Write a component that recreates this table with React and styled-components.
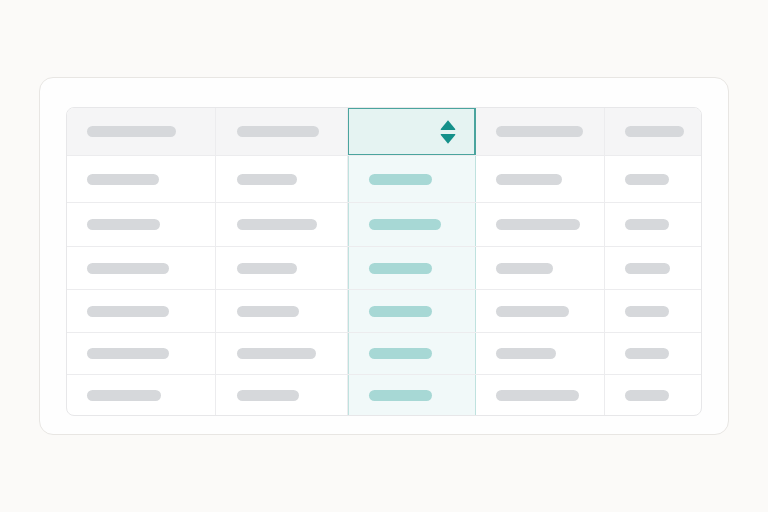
import React from "react";
import styled, { createGlobalStyle } from "styled-components";

const Global = createGlobalStyle`
  html, body { margin: 0; padding: 0; background: #fbfaf8; font-family: "Inter", "Liberation Sans", sans-serif; }
`;

const Page = styled.div`
  width: 100vw;
  height: 100vh;
  display: flex;
  align-items: center;
  justify-content: center;
`;

const Card = styled.div`
  box-sizing: border-box;
  width: 690px;
  height: 358px;
  padding: 29px 26px 20px 26px;
  background: #fefefe;
  border: 1px solid #e8e6e3;
  border-radius: 14px;
`;

const Table = styled.div`
  box-sizing: border-box;
  width: 636px;
  border: 1px solid #e7e7e9;
  border-radius: 8px;
  overflow: hidden;
  background: #fff;
`;

const Row = styled.div`
  display: grid;
  grid-template-columns: 149px 132px 128px 129px 96px;
  height: ${(p) => p.$h}px;
  border-bottom: ${(p) => (p.$last ? "none" : "1px solid #ececee")};
  background: ${(p) => (p.$header ? "#f5f5f6" : "transparent")};
  box-sizing: border-box;
`;

const Cell = styled.div`
  position: relative;
  display: flex;
  align-items: center;
  padding-left: ${(p) => p.$pad}px;
  box-sizing: border-box;
  border-right: ${(p) => (p.$lastCol ? "none" : p.$sel ? "1px solid #bfe2df" : "1px solid #ececee")};
  background: ${(p) => (p.$sel ? (p.$header ? "#e5f3f2" : "#f1f9f9") : "transparent")};
  ${(p) => (p.$sel && !p.$header ? "box-shadow: inset 1px 0 0 #bfe2df;" : "")}
  ${(p) => (p.$sel && p.$header ? "box-shadow: inset 0 0 0 1px #4aa49e; border-right-color: #4aa49e;" : "")}
`;

const Bar = styled.div`
  height: 11px;
  border-radius: 6px;
  background: ${(p) => (p.$teal ? "#a7d8d5" : "#d6d8db")};
`;

const SortIcon = styled.svg`
  position: absolute;
  right: 18px;
  top: 50%;
  transform: translateY(-50%);
`;

const headerBars = [89, 82, null, 87, 59];
const rows = [
  { h: 47, bars: [72, 60, 63, 66, 44] },
  { h: 44, bars: [73, 80, 72, 84, 44] },
  { h: 43, bars: [82, 60, 63, 57, 45] },
  { h: 43, bars: [82, 62, 63, 73, 44] },
  { h: 42, bars: [82, 79, 63, 60, 44] },
  { h: 40, bars: [74, 62, 63, 83, 44] },
];
const pads = [20, 21, 21, 20, 20];

export default function App() {
  return (
    <>
      <Global />
      <Page>
        <Card>
          <Table>
            <Row $header $h={48}>
              {headerBars.map((w, i) => (
                <Cell key={i} $pad={pads[i]} $sel={i === 2} $header $lastCol={i === 4}>
                  {w ? <Bar style={{ width: w }} /> : null}
                  {i === 2 && (
                    <SortIcon width="18" height="28" viewBox="0 0 18 28">
                      <path d="M9 2.2 L16.2 11 Q16.8 12 15.6 12 L2.4 12 Q1.2 12 1.8 11 Z" fill="#14908a" />
                      <path d="M9 25.8 L16.2 17 Q16.8 16 15.6 16 L2.4 16 Q1.2 16 1.8 17 Z" fill="#14908a" />
                    </SortIcon>
                  )}
                </Cell>
              ))}
            </Row>
            {rows.map((r, ri) => (
              <Row key={ri} $h={r.h} $last={ri === rows.length - 1}>
                {r.bars.map((w, i) => (
                  <Cell key={i} $pad={pads[i]} $sel={i === 2} $lastCol={i === 4}>
                    <Bar $teal={i === 2} style={{ width: w }} />
                  </Cell>
                ))}
              </Row>
            ))}
          </Table>
        </Card>
      </Page>
    </>
  );
}
